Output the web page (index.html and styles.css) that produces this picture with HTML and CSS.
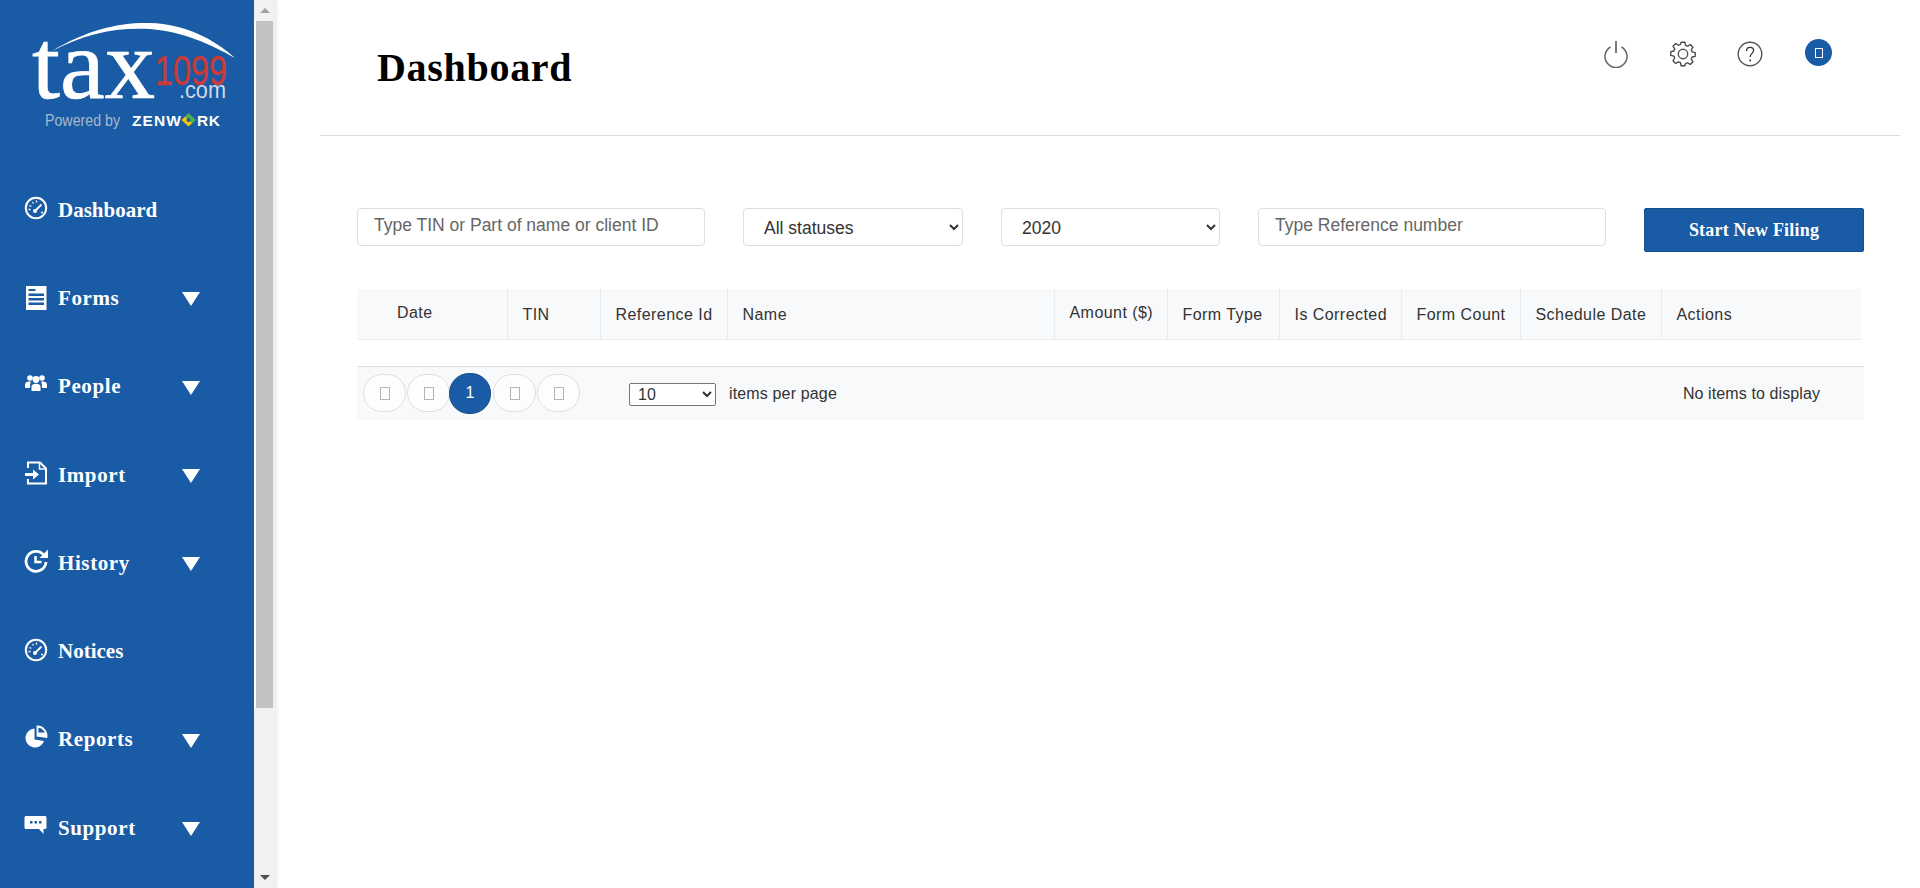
FILE: index.html
```html
<!DOCTYPE html>
<html lang="en">
<head>
  <meta charset="UTF-8" />
  <title>Dashboard</title>
  <link rel="stylesheet" href="styles.css">
</head>
<body>
  <div class="app">

    <!-- SIDEBAR -->
    <aside class="side-wrap">
      <div class="sidebar">
        <div class="logo">
          <svg width="254" height="165" viewBox="0 0 254 165">
            <path d="M52 51C88 29 122 22 150 23C185 24 214 39 235 58C210 44 184 32 150 29C115 27 85 34 52 51Z" fill="#fff"/>
            <text x="32" y="98" class="logo-tax" textLength="123" lengthAdjust="spacingAndGlyphs">tax</text>
            <text x="155" y="85" class="logo-num" textLength="72" lengthAdjust="spacingAndGlyphs">1099</text>
            <text x="179" y="98" class="logo-com" textLength="47" lengthAdjust="spacingAndGlyphs">.com</text>
            <text x="45" y="126" class="logo-by" textLength="75" lengthAdjust="spacingAndGlyphs">Powered by</text>
            <text x="132" y="126" class="logo-zen" textLength="49">ZENW</text>
            <path d="M188.500 113.500l7 6.500-7 6.500-7-6.500z" fill="#f1c40f"/>
            <path d="M188.500 113.500l7 6.500-3.500 3.200-7-6.500z" fill="#4caf50"/>
            <circle cx="188.500" cy="120" r="2" fill="#1a5ba5"/>
            <text x="197" y="126" class="logo-zen" textLength="23">RK</text>
          </svg>
        </div>
        <nav class="nav">
          <a class="nav-item">
            <svg class="nav-icon" viewBox="0 0 24 24"><circle cx="12" cy="12" r="10.200" fill="none" stroke="#fff" stroke-width="2"/><path d="M11 15l6.500-6.500" stroke="#fff" stroke-width="1.800" fill="none"/><circle cx="11" cy="15" r="2" fill="#fff"/><path d="M4.500 13.500h2M5.500 9.500l1.800.8M8.500 6l1 1.500M12.500 4.500v2M17 16.500h2" stroke="#fff" stroke-width="1.300"/></svg>
            <span class="nav-label nav-label-tight">Dashboard</span>
          </a>
          <a class="nav-item">
            <svg class="nav-icon icon-forms" viewBox="0 0 24 24"><path fill-rule="evenodd" d="M2 0h20.500v24H2zM4.500 3v2h7V3zM4.500 7.500v2.500h15.500V7.500zM4.500 12v2.500h15.500V12zM4.500 16.500V19h15.500v-2.500z" fill="#fff"/></svg>
            <span class="nav-label">Forms</span><i class="caret"></i>
          </a>
          <a class="nav-item">
            <svg class="nav-icon icon-people" viewBox="0 0 24 24"><g fill="#fff"><circle cx="6" cy="7" r="2.800"/><circle cx="18" cy="7" r="2.800"/><circle cx="12" cy="8.500" r="3.400"/><path d="M1 17v-3.500c0-2 2-3 4-3h2C6.300 12 6 13.500 6 15v2zM23 17v-3.500c0-2-2-3-4-3h-2c.7 1.500 1 3 1 4.500v2zM7.500 20v-4.500c0-2 1.800-2.800 4.500-2.800s4.500.8 4.500 2.800V20z"/></g></svg>
            <span class="nav-label">People</span><i class="caret"></i>
          </a>
          <a class="nav-item">
            <svg class="nav-icon" viewBox="0 0 24 24"><path d="M4 7V1.500h12L22 7.500v15H4V18" fill="none" stroke="#fff" stroke-width="2"/><path d="M15.500 2v6h6.500" fill="none" stroke="#fff" stroke-width="1.500"/><path d="M1 12h8v-3.500l6 5-6 5V15H1z" fill="#fff"/></svg>
            <span class="nav-label">Import</span><i class="caret"></i>
          </a>
          <a class="nav-item">
            <svg class="nav-icon" viewBox="0 0 24 24"><path d="M20.500 7A10 10 0 1 0 22 13" fill="none" stroke="#fff" stroke-width="2.800"/><path d="M24 0.500v8.500h-8.500z" fill="#fff"/><path d="M11.500 7v6h6" fill="none" stroke="#fff" stroke-width="2.500"/></svg>
            <span class="nav-label">History</span><i class="caret"></i>
          </a>
          <a class="nav-item">
            <svg class="nav-icon" viewBox="0 0 24 24"><circle cx="12" cy="12" r="10.200" fill="none" stroke="#fff" stroke-width="2"/><path d="M11 15l6.500-6.500" stroke="#fff" stroke-width="1.800" fill="none"/><circle cx="11" cy="15" r="2" fill="#fff"/><path d="M4.500 13.500h2M5.500 9.500l1.800.8M8.500 6l1 1.500M12.500 4.500v2M17 16.500h2" stroke="#fff" stroke-width="1.300"/></svg>
            <span class="nav-label nav-label-tight">Notices</span>
          </a>
          <a class="nav-item">
            <svg class="nav-icon icon-reports" viewBox="0 0 24 24"><path d="M10.500 4.500A9.500 9.500 0 1 0 20 17l-9.500-1.500z" fill="#fff"/><path d="M13.500 2.500a9.500 9.500 0 0 1 9 10.500l-9-1.200z" fill="none" stroke="#fff" stroke-width="1.800"/><path d="M13.500 8.500h8.500v4h-8.500z" fill="#fff"/></svg>
            <span class="nav-label">Reports</span><i class="caret"></i>
          </a>
          <a class="nav-item">
            <svg class="nav-icon icon-support" viewBox="0 0 24 24"><path fill-rule="evenodd" d="M2 1h19c.8 0 1.500.7 1.500 1.500v10c0 .8-.7 1.500-1.500 1.500h-1.500v5l-4.500-5H2c-.8 0-1.500-.7-1.500-1.500v-10C.5 1.700 1.200 1 2 1zM6 6v2.500h2.500V6zM10.500 6v2.500H13V6zM15 6v2.500h2.500V6z" fill="#fff"/></svg>
            <span class="nav-label">Support</span><i class="caret"></i>
          </a>
        </nav>
      </div>
      <div class="scrollbar">
        <div class="scroll-btn"><i class="arrow-up"></i></div>
        <div class="scroll-thumb"></div>
        <div class="scroll-rest"></div>
        <div class="scroll-btn"><i class="arrow-down"></i></div>
      </div>
    </aside>

    <!-- CONTENT -->
    <main class="main">
      <header class="top-bar">
        <h1>Dashboard</h1>
        <div class="top-icons">
          <svg class="top-icon" viewBox="0 0 28 28"><path d="M8.500 7A11 11 0 1 0 19.500 7" fill="none" stroke="#666" stroke-width="1.500"/><path d="M14 1v12" stroke="#333" stroke-width="1.300"/></svg>
          <svg class="top-icon" viewBox="0 0 28 28"><path d="M12 2h4l.7 3.300 2.200.9 2.800-1.800 2.900 2.900-1.800 2.800.9 2.200 3.300.7v4l-3.300.7-.9 2.200 1.800 2.800-2.900 2.900-2.800-1.800-2.200.9L16 27h-4l-.7-3.300-2.200-.9-2.800 1.800-2.900-2.900 1.800-2.800-.9-2.200L1 16v-4l3.300-.7.9-2.200-1.800-2.800 2.900-2.900 2.800 1.800 2.200-.9z" transform="translate(14 14) scale(.94) translate(-14 -14.500)" fill="none" stroke="#444" stroke-width="1.400" stroke-linejoin="round"/><circle cx="14" cy="14" r="4.700" fill="none" stroke="#555" stroke-width="1.400"/></svg>
          <svg class="top-icon" viewBox="0 0 28 28"><circle cx="14" cy="14" r="11.800" fill="none" stroke="#555" stroke-width="1.400"/><path d="M10.500 11c0-2.200 1.600-3.600 3.600-3.600s3.500 1.300 3.500 3.200c0 2.800-3.400 2.900-3.400 6.400" fill="none" stroke="#333" stroke-width="1.300"/><circle cx="14.200" cy="20.500" r="1" fill="#333"/></svg>
          <div class="avatar"><i class="tofu tofu-light"></i></div>
        </div>
      </header>

      <section class="content">
        <div class="filters">
          <input class="field field-text" type="text" placeholder="Type TIN or Part of name or client ID">
          <select class="field field-select">
            <option>All statuses</option>
          </select>
          <select class="field field-select">
            <option>2020</option>
          </select>
          <input class="field field-text" type="text" placeholder="Type Reference number">
          <button class="btn-new">Start New Filing</button>
        </div>

        <table class="grid">
          <thead>
            <tr>
              <th class="col-date up">Date</th>
              <th class="col-tin">TIN</th>
              <th class="col-ref">Reference Id</th>
              <th class="col-name">Name</th>
              <th class="col-amount up">Amount ($)</th>
              <th class="col-type">Form Type</th>
              <th class="col-corrected">Is Corrected</th>
              <th class="col-count">Form Count</th>
              <th class="col-schedule">Schedule Date</th>
              <th>Actions</th>
            </tr>
          </thead>
        </table>

        <div class="pager">
          <div class="pages">
            <a class="page"><i class="tofu"></i></a>
            <a class="page"><i class="tofu"></i></a>
            <a class="page page-on">1</a>
            <a class="page"><i class="tofu"></i></a>
            <a class="page"><i class="tofu"></i></a>
          </div>
          <select class="page-size">
            <option>10</option>
          </select>
          <span class="page-text">items per page</span>
          <span class="page-info">No items to display</span>
        </div>
      </section>
    </main>
  </div>
</body>
</html>
```

FILE: styles.css
```css
* {
  box-sizing: border-box;
  margin: 0;
  padding: 0;
}
html, body {
  height: 100%;
  overflow: hidden;
}
body {
  background: #fff;
  color: #212529;
  font-family: "Liberation Sans", Arial, sans-serif;
  font-size: 16px;
}
.app {
  display: flex;
  height: 888px;
}

/* === SIDEBAR === */
.side-wrap {
  display: flex;
  flex: 0 0 275px;
  height: 888px;
  box-shadow: 1px 0 4px rgba(0,0,0,0.13);
}
.sidebar {
  flex: 0 0 254px;
  background: #1a5ba5;
  overflow: hidden;
}
.logo {
  height: 165px;
}
.logo svg {
  display: block;
}
.logo-tax {
  font: 100px "Liberation Serif", serif;
  fill: #fff;
  stroke: #fff;
  stroke-width: 0.7px;
}
.logo-num {
  font: 43px "Liberation Sans", sans-serif;
  fill: #c93a3a;
  stroke: #c93a3a;
  stroke-width: 0.5px;
}
.logo-com {
  font: 23px "Liberation Sans", sans-serif;
  fill: #cfd9e6;
}
.logo-by {
  font: 17px "Liberation Sans", sans-serif;
  fill: #a9b8cc;
}
.logo-zen {
  font: bold 15.5px "Liberation Sans", sans-serif;
  fill: #fff;
}
.nav-item {
  display: flex;
  align-items: center;
  height: 88.3px;
  padding-left: 24px;
  color: #fff;
}
.nav-icon {
  flex: 0 0 24px;
  width: 24px;
  height: 24px;
  margin-right: 10px;
  margin-top: -2px;
}
.icon-forms {
  margin-top: 1px;
}
.icon-people {
  margin-top: -6px;
}
.icon-reports {
  margin-top: -6px;
}
.icon-support {
  margin-top: 0;
}
.nav-label {
  width: 124px;
  margin-top: 2px;
  font: bold 21px "Liberation Serif", serif;
  letter-spacing: 0.6px;
}
.nav-label-tight {
  letter-spacing: 0;
}
.caret {
  width: 0;
  height: 0;
  margin-top: 4px;
  border-left: 9.500px solid transparent;
  border-right: 9.500px solid transparent;
  border-top: 14px solid #fff;
}

/* scrollbar de la barra lateral */
.scrollbar {
  display: flex;
  flex-direction: column;
  flex: 1;
  background: #f1f1f1;
}
.scroll-btn {
  display: flex;
  align-items: center;
  justify-content: center;
  flex: 0 0 21px;
}
.arrow-up {
  border-left: 5px solid transparent;
  border-right: 5px solid transparent;
  border-bottom: 5px solid #a3a3a3;
}
.arrow-down {
  border-left: 5px solid transparent;
  border-right: 5px solid transparent;
  border-top: 5px solid #505050;
}
.scroll-thumb {
  flex: 0 0 687px;
  background: #c1c1c1;
  border-left: 2px solid #fff;
  border-right: 2px solid #f1f1f1;
}
.scroll-rest {
  flex: 1;
}

/* === MAIN === */
.main {
  flex: 1;
  min-width: 0;
  padding-left: 45px;
}
.top-bar {
  display: flex;
  justify-content: space-between;
  width: 1580px;
  height: 136px;
  border-bottom: 1px solid #dedede;
}
.top-bar h1 {
  margin-left: 57px;
  margin-top: 45px;
  font: bold 40px "Liberation Serif", serif;
  line-height: 46px;
  letter-spacing: 0.7px;
  color: #000;
}
.top-icons {
  display: flex;
  align-items: flex-start;
  padding-top: 40px;
  padding-right: 68px;
}
.top-icon {
  width: 28px;
  height: 28px;
  margin-right: 39px;
}
.avatar {
  display: flex;
  align-items: center;
  justify-content: center;
  width: 27px;
  height: 27px;
  margin-top: -1px;
  margin-left: 2px;
  border-radius: 50%;
  background: #1a5ba5;
}
.tofu {
  display: block;
  width: 10px;
  height: 13px;
  border: 1px solid #b5b5b5;
}
.tofu-light {
  width: 8px;
  height: 10px;
  border-color: #fff;
}

.content {
  width: 1544px;
  padding-left: 37px;
}

/* === FILTERS === */
.filters {
  display: grid;
  grid-template-columns: 348px 220px 219px 348px 220px;
  column-gap: 38px;
  align-items: start;
  margin-top: 72px;
}
.field {
  height: 38px;
  border: 1px solid #dcdfe3;
  border-radius: 4px;
  background: #fff;
  font-family: "Liberation Sans", Arial, sans-serif;
  font-size: 17.5px;
  color: #333;
  outline: none;
}
.field-text {
  padding: 0 16px 3px;
}
.field-text::placeholder {
  color: #666;
  opacity: 1;
}
.field-select {
  padding-top: 2px;
  padding-left: 16px;
}
.btn-new {
  height: 44px;
  border: 1px solid #16508f;
  border-radius: 2px;
  background: #1a5ba5;
  color: #fff;
  font: bold 18px "Liberation Serif", serif;
  letter-spacing: 0.2px;
}

/* === TABLE === */
.grid {
  width: 1504px;
  margin-top: 37px;
  border-collapse: collapse;
  table-layout: fixed;
  background: #f8f9fa;
}
.grid th {
  height: 50px;
  padding: 2px 0 0 15px;
  border-bottom: 1px solid #e9ecef;
  border-right: 1px solid #e9ecef;
  font-weight: normal;
  font-size: 16px;
  letter-spacing: 0.45px;
  text-align: left;
  color: #333;
}
.grid th:last-child {
  border-right: none;
}
.grid th.up {
  padding-top: 0;
  padding-bottom: 1px;
}
.grid th.col-date {
  width: 150px;
  padding-left: 40px;
}
.col-tin { width: 93px; }
.col-ref { width: 127px; }
.col-name { width: 327px; }
.col-amount { width: 113px; }
.col-type { width: 112px; }
.col-corrected { width: 122px; }
.col-count { width: 119px; }
.col-schedule { width: 141px; }

/* === PAGER === */
.pager {
  display: flex;
  align-items: center;
  height: 54px;
  margin-top: 26px;
  padding-left: 6px;
  padding-right: 44px;
  border-top: 1px solid #dee2e6;
  background: #f8f9fa;
  font-size: 16px;
  color: #333;
}
.pages {
  display: flex;
  align-items: center;
  gap: 1px;
}
.page {
  display: flex;
  align-items: center;
  justify-content: center;
  width: 43px;
  height: 38px;
  border: 1px solid #dfdfdf;
  border-radius: 19px;
  background: #fdfdfd;
}
.page-on {
  width: 42px;
  height: 41px;
  margin: 0 1px 0 -2px;
  border-radius: 20px;
  border-color: #174f8f;
  background: #1a5ba5;
  color: #fff;
}
.page-size {
  width: 87px;
  height: 23px;
  margin-top: 2px;
  margin-left: 49px;
  padding-left: 4px;
  border: 1px solid #767676;
  border-radius: 2px;
  background: #fff;
  font-family: "Liberation Sans", Arial, sans-serif;
  font-size: 16px;
  color: #333;
}
.page-text {
  margin-top: 2px;
  margin-left: 13px;
  letter-spacing: 0.15px;
}
.page-info {
  margin-top: 2px;
  margin-left: auto;
  letter-spacing: 0.1px;
}
```
